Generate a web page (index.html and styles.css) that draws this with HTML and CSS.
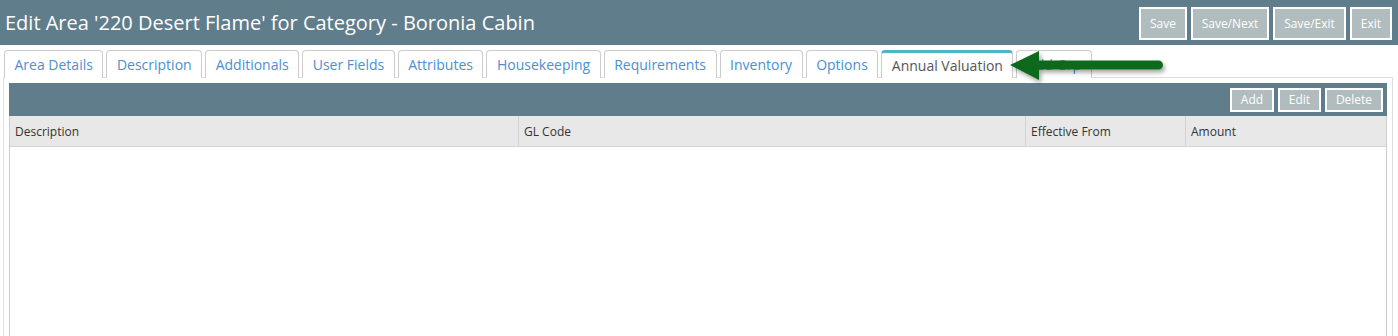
FILE: index.html
```html
<!DOCTYPE html>
<html lang="en">
<head>
    <meta charset="UTF-8">
    <title>Edit Area - Annual Valuation</title>
    <link rel="stylesheet" href="styles.css">
</head>
<body>
    <div class="page-header">
        <h1>Edit Area '220 Desert Flame' for Category - Boronia Cabin</h1>
        <div class="header-actions">
            <button class="btn btn-save">Save</button>
            <button class="btn btn-next">Save/Next</button>
            <button class="btn btn-exit-save">Save/Exit</button>
            <button class="btn btn-exit">Exit</button>
        </div>
    </div>

    <div class="tab-wrap">
        <ul class="tabs">
            <li class="tab">Area Details</li>
            <li class="tab">Description</li>
            <li class="tab">Additionals</li>
            <li class="tab">User Fields</li>
            <li class="tab">Attributes</li>
            <li class="tab">Housekeeping</li>
            <li class="tab">Requirements</li>
            <li class="tab">Inventory</li>
            <li class="tab">Options</li>
            <li class="tab active">Annual Valuation</li>
            <li class="tab">Add Grp</li>
        </ul>

        <!-- arrow callout pointing at the active tab -->
        <svg class="callout-arrow" width="170" height="40" viewBox="0 0 170 40">
            <defs>
                <filter id="shadow" x="-10%" y="-30%" width="120%" height="160%">
                    <feDropShadow dx="2" dy="3" stdDeviation="2" flood-color="#000" flood-opacity="0.35"/>
                </filter>
            </defs>
            <g filter="url(#shadow)">
                <path d="M4 18 L33 4 L33 13.5 L152.5 13.5 A4.5 4.5 0 0 1 152.5 22.5 L33 22.5 L33 33 Z" fill="#0f6b1b"/>
            </g>
        </svg>
    </div>

    <div class="tab-panel">
        <div class="grid">
            <div class="grid-toolbar">
                <button class="btn btn-small btn-add">Add</button>
                <button class="btn btn-small btn-edit">Edit</button>
                <button class="btn btn-small btn-delete">Delete</button>
            </div>
            <table class="grid-table">
                <thead>
                    <tr>
                        <th class="col-desc">Description</th>
                        <th class="col-gl">GL Code</th>
                        <th class="col-from">Effective From</th>
                        <th class="col-amount">Amount</th>
                    </tr>
                </thead>
                <tbody>
                </tbody>
            </table>
        </div>
    </div>
</body>
</html>
```

FILE: styles.css
```css
/* General layout */
body {
    font-family: 'Open Sans', 'Noto Sans', sans-serif;
    margin: 0;
    padding: 0;
    background: #fff;
    color: #333;
    width: 1398px;
    height: 336px;
    overflow: hidden;
}

.page-header {
    background: #607d8b;
    height: 45px;
    display: flex;
    align-items: center;
    justify-content: space-between;
    padding: 0 6px 0 5px;
}

.page-header h1 {
    margin: 0;
    color: #fff;
    font-size: 20px;
    font-weight: 400;
}

.header-actions {
    display: flex;
    gap: 4px;
    margin-top: 1px;
}

.btn {
    font-family: 'Open Sans', 'Noto Sans', sans-serif;
    background: #b0bcbe;
    color: #fff;
    border: 2px solid #fff;
    font-size: 12px;
    padding: 0;
    height: 33px;
    cursor: pointer;
}

.btn-save { width: 48px; }
.btn-next { width: 78px; }
.btn-exit-save { width: 73px; }
.btn-exit { width: 42px; }

/* Tabs */
.tab-wrap {
    position: relative;
    padding: 5px 0 0 4px;
}

.tabs {
    list-style: none;
    margin: 0 0 -1px 0;
    padding: 0;
    display: flex;
    gap: 3px;
    position: relative;
    z-index: 1;
}

.tab {
    border: 1px solid #ccc;
    border-bottom: none;
    border-radius: 4px 4px 0 0;
    height: 27px;
    line-height: 27px;
    padding: 0 9.5px;
    font-size: 14px;
    color: #4a90d2;
    background: #fff;
}

.tab.active {
    color: #555;
    border-top: 3px solid #4cb6c1;
    height: 25px;
    line-height: 25px;
    border-color: #4cb6c1 #ccc #ccc #ccc;
}

.callout-arrow {
    position: absolute;
    left: 1006px;
    top: 2px;
    z-index: 2;
}

/* Panel */
.tab-panel {
    margin: 0 5px 0 3px;
    border: 1px solid #ddd;
    padding: 5px 5px 0 5px;
    height: 260px;
}

.grid {
    border-left: 1px solid #ccc;
    border-right: 1px solid #ccc;
    height: 100%;
}

.grid-toolbar {
    background: #607d8b;
    height: 33px;
    display: flex;
    justify-content: flex-end;
    align-items: center;
    gap: 4px;
    padding-right: 4px;
    margin: 0 -1px;
}

.btn-small {
    height: 24px;
    font-size: 12px;
}

.btn-add { width: 44px; }
.btn-edit { width: 43px; }
.btn-delete { width: 58px; }

.grid-table {
    width: 100%;
    border-collapse: collapse;
    table-layout: fixed;
}

.grid-table th {
    background: #e8e8e8;
    height: 30px;
    border-bottom: 1px solid #d3d3d3;
    border-left: 1px solid #d3d3d3;
    font-size: 12px;
    font-weight: 400;
    text-align: left;
    padding: 0 0 0 5px;
    color: #333;
}

.grid-table th:first-child {
    border-left: none;
}

.col-desc { width: 503px; }
.col-gl { width: 501px; }
.col-from { width: 154px; }
```
